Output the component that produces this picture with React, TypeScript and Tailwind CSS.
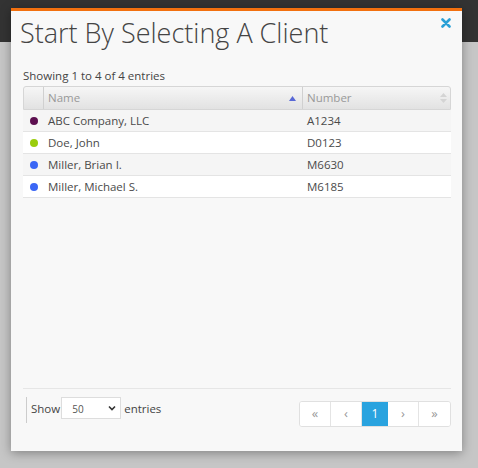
import type { FC } from 'react';

type Client = { name: string; number: string; color: string };

const clients: Client[] = [
  { name: 'ABC Company, LLC', number: 'A1234', color: '#5c0f4f' },
  { name: 'Doe, John', number: 'D0123', color: '#9acd0c' },
  { name: 'Miller, Brian I.', number: 'M6630', color: '#3a66f5' },
  { name: 'Miller, Michael S.', number: 'M6185', color: '#3a66f5' },
];

const PageButton: FC<{ label: string; active?: boolean }> = ({ label, active }) => (
  <div
    className={
      active
        ? 'flex h-full w-[26px] items-center justify-center bg-[#29a3df] text-[12px] text-white'
        : 'flex h-full w-[31px] items-center justify-center border-r border-[#e4e4e4] bg-white text-[13px] text-[#999] last:border-r-0'
    }
  >
    {label}
  </div>
);

const App: FC = () => {
  return (
    <div className="relative h-[468px] w-[478px] overflow-hidden bg-[#c6c6c6] font-['Open_Sans',sans-serif]">
      <div className="h-[42px] bg-[#333333]" />

      <div className="absolute left-[11px] top-[8px] flex h-[443px] w-[451px] flex-col border-t-[3px] border-[#f2700f] bg-[#f8f8f8] shadow-[0_2px_10px_rgba(0,0,0,0.35)]">
        <div className="relative h-[56px] pl-[9px] pt-[4px]">
          <h1 className="text-[27px] font-light leading-[36px] text-[#444]">Start By Selecting A Client</h1>
          <svg className="absolute right-[11px] top-[7px]" width="10" height="10" viewBox="0 0 10 10">
            <path d="M1.5 1.5 L8.5 8.5 M8.5 1.5 L1.5 8.5" stroke="#2aa0d6" strokeWidth="2.6" strokeLinecap="round" />
          </svg>
        </div>

        <div className="flex flex-1 flex-col pl-[12px] pr-[11px]">
          <div className="text-[11.5px] leading-[18px] text-[#444]">Showing 1 to 4 of 4 entries</div>

          <div className="mt-[1px]">
            <div className="flex h-[24px] rounded-t-[3px] border border-[#d6d6d6] bg-[linear-gradient(#f6f6f6,#e2e2e2)] text-[11.5px] text-[#999]">
              <div className="w-[20px] border-r border-[#d0d0d0]" />
              <div className="flex flex-1 items-center justify-between border-r border-[#d0d0d0] pl-[4px] pr-[6px]">
                <span>Name</span>
                <svg width="7" height="5" viewBox="0 0 7 5">
                  <path d="M3.5 0 L7 5 L0 5 Z" fill="#5868d6" />
                </svg>
              </div>
              <div className="flex w-[147px] items-center justify-between pl-[4px] pr-[3px]">
                <span>Number</span>
                <svg width="7" height="10" viewBox="0 0 7 10">
                  <path d="M3.5 0 L7 4 L0 4 Z M3.5 10 L7 6 L0 6 Z" fill="#d4d4d4" />
                </svg>
              </div>
            </div>

            {clients.map((c, i) => (
              <div
                key={c.name}
                className={`flex h-[22px] items-center border-b border-[#e4e4e4] text-[11.5px] text-[#4a4a4a] ${
                  i % 2 === 0 ? 'bg-[#f5f5f5]' : 'bg-white'
                }`}
              >
                <div className="flex w-[21px] items-center justify-center">
                  <span className="h-[8px] w-[8px] rounded-full" style={{ backgroundColor: c.color }} />
                </div>
                <div className="flex-1 pl-[4px]">{c.name}</div>
                <div className="w-[148px] pl-[4px]">{c.number}</div>
              </div>
            ))}
          </div>

          <div className="mt-auto border-t border-[#e6e6e6]" />
          <div className="flex h-[62px] items-start justify-between pt-[8px]">
            <div className="ml-[3px] flex items-start border-l border-[#ccc] pl-[4px] text-[11.5px] text-[#444]">
              <span className="mt-[3px]">Show</span>
              <div className="ml-[1px] flex h-[22px] w-[60px] items-center justify-between border border-[#ddd] bg-white pl-[10px] pr-[4px] text-[10px] text-[#555]">
                <span className="mt-[2px]">50</span>
                <svg width="8" height="6" viewBox="0 0 8 6">
                  <path d="M1 1.5 L4 4.5 L7 1.5" stroke="#333" strokeWidth="1.6" fill="none" />
                </svg>
              </div>
              <span className="ml-[3px] mt-[3px]">entries</span>
              <div className="h-[26px]" />
            </div>

            <div className="mt-[4px] flex h-[26px] overflow-hidden rounded-[3px] border border-[#e0e0e0] bg-white">
              <PageButton label="«" />
              <PageButton label="‹" />
              <PageButton label="1" active />
              <PageButton label="›" />
              <PageButton label="»" />
            </div>
          </div>
        </div>
      </div>
    </div>
  );
};

export default App;
